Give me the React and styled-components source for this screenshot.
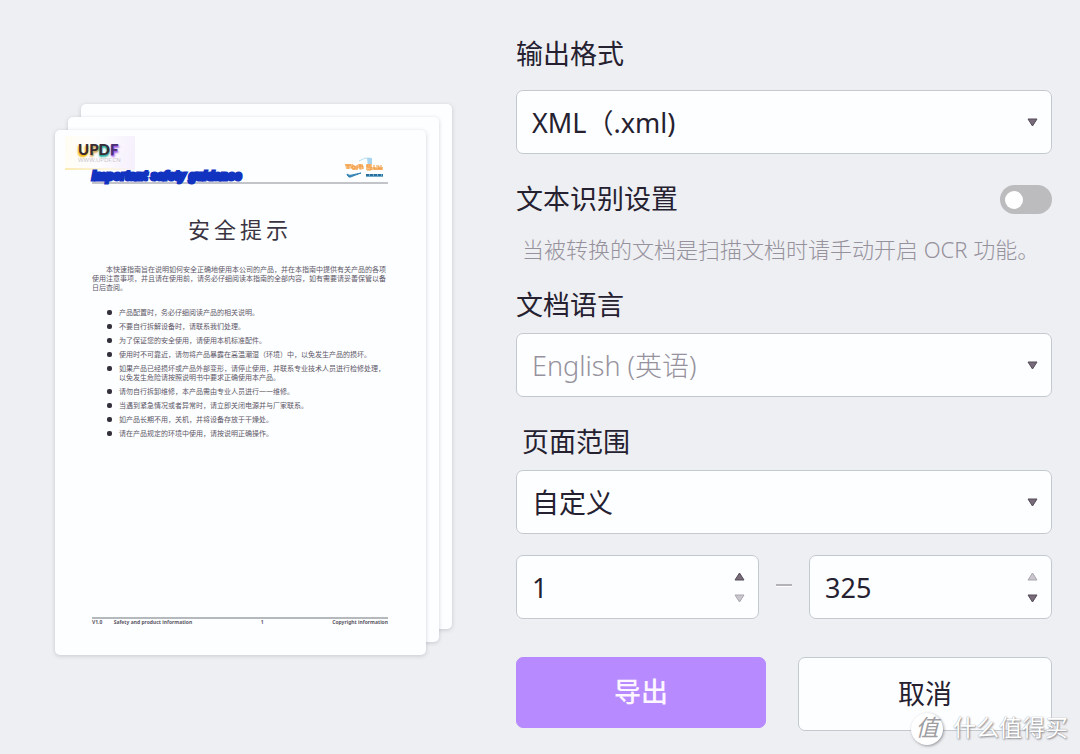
import React, { useState } from "react";
import styled, { createGlobalStyle } from "styled-components";

const GlobalStyle = createGlobalStyle`
  *, *::before, *::after { box-sizing: border-box; }
  body {
    margin: 0;
    background: #eeeff2;
    color: #252130;
    font-family: "Noto Sans", "Noto Sans CJK SC", sans-serif;
  }
  button, input, select { font: inherit; color: inherit; margin: 0; }
`;

const Dialog = styled.main`
  position: relative;
  display: grid;
  grid-template-columns: minmax(0, 397fr) minmax(0, 536fr);
  column-gap: 64px;
  align-items: start;
  min-height: 100vh;
  padding: 36px 28px 22px 55px;
`;

const Stack = styled.section`
  position: relative;
  margin-top: 68px;
  padding: 26px 26px 0 0;
`;

const sheet = `
  background: #fdfeff;
  border-radius: 5px;
  box-shadow: 0 1px 4px rgba(70, 80, 100, 0.24);
`;

const BackSheet = styled.div`
  position: absolute;
  top: ${(p) => 26 - p.$depth * 13}px;
  bottom: ${(p) => p.$depth * 13}px;
  left: ${(p) => p.$depth * 13}px;
  right: ${(p) => 26 - p.$depth * 13}px;
  ${sheet}
`;

const FrontSheet = styled.article`
  position: relative;
  display: flex;
  flex-direction: column;
  min-height: 525px;
  padding: 6px 38px 30px 37px;
  color: #5c5766;
  font-size: 7px;
  line-height: 9px;
  ${sheet}
`;

const SheetHeader = styled.header`
  display: grid;
  grid-template-columns: 1fr 44px;
  align-items: end;
  border-bottom: 2px solid #c3c4ca;
`;

const Brand = styled.div`
  width: 70px;
  height: 34px;
  margin-left: -27px;
  padding: 6px 0 0 13px;
  background: linear-gradient(100deg, #fffdf2, #fdfcfe 50%, #f5effd);
  border-bottom: 2px solid;
  border-image: linear-gradient(90deg, #fbe9b0, #fdf6e0 60%, #f5effd) 1;
  color: #c9c5ca;
  font-size: 6px;
  line-height: 7px;
`;

const BrandName = styled.div`
  font-family: Lato, sans-serif;
  font-weight: 900;
  font-size: 15px;
  line-height: 15px;
  color: #382b35;
  text-shadow: -1px 2px 2px #f0b800, 0 1px 1px #f0c02a;
  span:nth-child(2) { text-shadow: 0 2px 2px #e5a05a, 1px 1px 1px #7cc07a; }
  span:nth-child(3) { text-shadow: 0 2px 2px #20b090, 0 1px 1px #3c90c0; }
  span:nth-child(4) { color: #4b3071; text-shadow: 1px 2px 2px #9a5ce0, 0 1px 1px #8a4cd0; }
`;

const DocName = styled.div`
  font-family: "Liberation Sans", sans-serif;
  font-size: 12px;
  line-height: 12px;
  font-weight: 700;
  font-style: italic;
  color: #1233c0;
  -webkit-text-stroke: 3px #1233c0;
  white-space: nowrap;
`;

const SheetTitle = styled.h1`
  margin: 29px 0 20px;
  font-size: 22px;
  line-height: 32px;
  font-weight: 400;
  text-align: center;
  letter-spacing: 4px;
  color: #3a3442;
`;

const Intro = styled.p`
  margin: 0 0 16px;
  text-indent: 14px;
  line-height: 9px;
  word-break: break-all;
`;

const Tips = styled.ul`
  display: grid;
  gap: 5px;
  margin: 0;
  padding: 0 0 0 27px;
  list-style: none;
  word-break: break-all;
`;

const Tip = styled.li`
  display: block;
  &::before {
    content: "";
    float: left;
    width: 5px;
    height: 5px;
    margin: 2px 0 0 -12px;
    border-radius: 2px;
    background: #33303b;
  }
`;

const SheetFooter = styled.footer`
  display: flex;
  justify-content: space-between;
  margin-top: auto;
  border-top: 2px solid #b5b8bd;
  font-size: 5px;
  line-height: 6px;
  font-weight: 700;
`;

const Form = styled.form`
  display: flex;
  flex-direction: column;
`;

const Label = styled.label`
  font-size: 27px;
  line-height: 36px;
  padding-left: ${(p) => (p.$inset ? 6 : 0)}px;
`;

const Field = styled.div`
  display: flex;
  flex-direction: column;
  gap: ${(p) => p.$gap || 10}px;
  margin-bottom: ${(p) => p.$after}px;
`;

const SwitchRow = styled.div`
  display: flex;
  align-items: center;
  justify-content: space-between;
`;

const Switch = styled.input`
  appearance: none;
  width: 52px;
  height: 29px;
  padding: 6px 5px;
  border-radius: 15px;
  background: #bcbcbe;
  &::before {
    content: "";
    display: block;
    width: 18px;
    height: 18px;
    border-radius: 50%;
    background: #fff;
  }
  &:checked { background: #b78bff; }
  &:checked::before { margin-left: auto; }
`;

const Hint = styled.p`
  margin: 16px 0 22px;
  padding-left: 6px;
  font-size: 22px;
  line-height: 32px;
  font-weight: 300;
  color: #96929d;
  white-space: nowrap;
`;

const box = `
  background: #fdfeff;
  border: 1px solid #c3c9cf;
  border-radius: 7px;
`;

const SelectBox = styled.div`
  display: grid;
  align-items: center;
  ${box}
  > * { grid-area: 1 / 1; }
  > svg { justify-self: end; margin-right: 13px; pointer-events: none; }
`;

const Select = styled.select`
  appearance: none;
  width: 100%;
  height: 62px;
  padding: 0 40px 0 15px;
  border: 0;
  border-radius: 7px;
  background: transparent;
  font-size: 27px;
  font-weight: ${(p) => (p.$muted ? 300 : 400)};
  color: ${(p) => (p.$muted ? "#96929d" : "#252130")};
  opacity: 1;
`;

const Range = styled.div`
  display: grid;
  grid-template-columns: 1fr 50px 1fr;
  align-items: center;
  margin: 21px 0 38px;
`;

const Dash = styled.span`
  justify-self: center;
  width: 16px;
  height: 3px;
  margin-bottom: 4px;
  background: #b3b2b6;
  border-bottom: 1px solid #fff;
`;

const NumberBox = styled.div`
  display: flex;
  align-items: center;
  padding-right: 12px;
  ${box}
`;

const NumberInput = styled.input`
  appearance: textfield;
  flex: 1;
  min-width: 0;
  height: 62px;
  padding: 0 0 0 15px;
  border: 0;
  background: transparent;
  font-size: 27px;
  &::-webkit-inner-spin-button { appearance: none; }
`;

const Steppers = styled.div`
  display: grid;
  gap: 8px;
`;

const Step = styled.button`
  display: grid;
  place-items: center;
  width: 13px;
  height: 14px;
  padding: 0;
  border: 0;
  background: none;
`;

const Actions = styled.div`
  display: grid;
  grid-template-columns: 250fr 254fr;
  gap: 32px;
`;

const Button = styled.button`
  height: ${(p) => (p.$primary ? 71 : 74)}px;
  padding: 0 0 4px;
  font-size: 27px;
  ${box}
  ${(p) =>
    p.$primary &&
    `background: #b78bff; border-color: #b78bff; color: #fdf5ff; font-weight: 500;`}
`;

const Watermark = styled.div`
  position: absolute;
  right: 12px;
  bottom: 9px;
  display: flex;
  align-items: flex-start;
  gap: 10px;
  font-size: 23px;
  line-height: 28px;
  color: #fff;
  text-shadow: 1px 1px 2px #85858c, 0 0 1px #96969c;
`;

const Seal = styled.span`
  width: 32px;
  height: 32px;
  border-radius: 50%;
  background: #fff;
  box-shadow: 1px 1px 3px rgba(90, 90, 100, 0.6);
  text-align: center;
  font-style: italic;
  color: #9d9da2;
  text-shadow: none;
`;

const Triangle = ({ up, faint }) => (
  <svg width="11" height="9" viewBox="0 0 11 9" aria-hidden="true">
    <path
      d={up ? "M5.5 1 10 8H1Z" : "M1 1h9L5.5 8Z"}
      fill={faint ? "#c9c6cd" : "#786c7b"}
      stroke={faint ? "#a9a5ae" : "#554a59"}
      strokeWidth="1"
    />
  </svg>
);

const PartnerLogo = () => (
  <svg width="44" height="26" viewBox="0 0 44 26" aria-hidden="true">
    <path d="M15 5Q21 1 26 2" fill="none" stroke="#b5def5" strokeWidth="1" />
    <path d="M23 2h5v9h-4z" fill="#a6d3f0" />
    <path d="M1 8h8l1 2h3l1-2h5v5l-3 1-1-2-3 2H9l-1-2-3 1H2zM22 8h6v3h11v3H22z" fill="#f9c386" />
    <g fill="none" stroke="#f0983f" strokeWidth="1">
      <path d="M1 9h6M4 9v4M8 10v3h3v-3zM13 9v5M16 8v5M15 10h4v3M27 9h-4v2h4v3h-4M30 9v4h8M32 10h3v3M37 9v4" />
    </g>
    <path d="M3 18q1 5 6 2l8-3q-5 1-9 2-3 1-5-1z" fill="#3584b5" stroke="#3584b5" strokeWidth="1" />
    <path d="M22 18h17v3H22z" fill="#72aacb" />
    <path d="M22 19h17" stroke="#28719e" strokeWidth="2" strokeDasharray="3 1" />
  </svg>
);

const TIPS = [
  "产品配置时，务必仔细阅读产品的相关说明。",
  "不要自行拆解设备时，请联系我们处理。",
  "为了保证您的安全使用，请使用本机标准配件。",
  "使用时不可靠近，请勿将产品暴露在高温潮湿（环境）中，以免发生产品的损坏。",
  "如果产品已经损坏或产品外部变形，请停止使用，并联系专业技术人员进行检修处理，以免发生危险请按照说明书中要求正确使用本产品。",
  "请勿自行拆卸维修，本产品需由专业人员进行一一维修。",
  "当遇到紧急情况或者异常时，请立即关闭电源并与厂家联系。",
  "如产品长期不用，关机，并将设备存放于干燥处。",
  "请在产品规定的环境中使用，请按说明正确操作。",
];

const Dropdown = ({ id, options, muted }) => (
  <SelectBox>
    <Select id={id} $muted={muted} disabled={muted}>
      {options.map((o) => (
        <option key={o}>{o}</option>
      ))}
    </Select>
    <Triangle />
  </SelectBox>
);

const Stepper = ({ label, initial, min, max }) => {
  const [value, setValue] = useState(initial);
  const set = (n) => setValue(Math.min(max, Math.max(min, Number(n))));
  return (
    <NumberBox>
      <NumberInput
        type="number"
        aria-label={label}
        value={value}
        min={min}
        max={max}
        onChange={(e) => set(e.target.value)}
      />
      <Steppers>
        <Step type="button" aria-label="增加" onClick={() => set(value + 1)}>
          <Triangle up faint={value >= max} />
        </Step>
        <Step type="button" aria-label="减少" onClick={() => set(value - 1)}>
          <Triangle faint={value <= min} />
        </Step>
      </Steppers>
    </NumberBox>
  );
};

const Preview = () => (
  <Stack>
    <BackSheet $depth={2} />
    <BackSheet $depth={1} />
    <FrontSheet>
      <SheetHeader>
        <div>
          <Brand>
            <BrandName>
              <span>U</span><span>P</span><span>D</span><span>F</span>
            </BrandName>
            WWW.UPDF.CN
          </Brand>
          <DocName>Important safety guidance</DocName>
        </div>
        <PartnerLogo />
      </SheetHeader>
      <SheetTitle>安全提示</SheetTitle>
      <Intro>
        本快速指南旨在说明如何安全正确地使用本公司的产品，并在本指南中提供有关产品的各项使用注意事项，并且请在使用前，请务必仔细阅读本指南的全部内容，如有需要请妥善保管以备日后查阅。
      </Intro>
      <Tips>
        {TIPS.map((t) => (
          <Tip key={t}>{t}</Tip>
        ))}
      </Tips>
      <SheetFooter>
        <span>V1.0　　 Safety and product information</span>
        <span>1</span>
        <span>Copyright information</span>
      </SheetFooter>
    </FrontSheet>
  </Stack>
);

export default function App() {
  return (
    <>
      <GlobalStyle />
      <Dialog>
        <Preview />
        <Form onSubmit={(e) => e.preventDefault()}>
          <Field $gap={18} $after={27}>
            <Label htmlFor="format">输出格式</Label>
            <Dropdown id="format" options={["XML（.xml)"]} />
          </Field>
          <SwitchRow>
            <Label htmlFor="ocr">文本识别设置</Label>
            <Switch id="ocr" type="checkbox" role="switch" />
          </SwitchRow>
          <Hint>当被转换的文档是扫描文档时请手动开启 OCR 功能。</Hint>
          <Field $after={27}>
            <Label htmlFor="language">文档语言</Label>
            <Dropdown id="language" options={["English (英语)"]} muted />
          </Field>
          <Field $after={0}>
            <Label htmlFor="range" $inset>页面范围</Label>
            <Dropdown id="range" options={["自定义"]} />
          </Field>
          <Range>
            <Stepper label="起始页" initial={1} min={1} max={325} />
            <Dash />
            <Stepper label="结束页" initial={325} min={1} max={325} />
          </Range>
          <Actions>
            <Button type="submit" $primary>导出</Button>
            <Button type="button">取消</Button>
          </Actions>
        </Form>
        <Watermark>
          <Seal>值</Seal>
          什么值得买
        </Watermark>
      </Dialog>
    </>
  );
}
